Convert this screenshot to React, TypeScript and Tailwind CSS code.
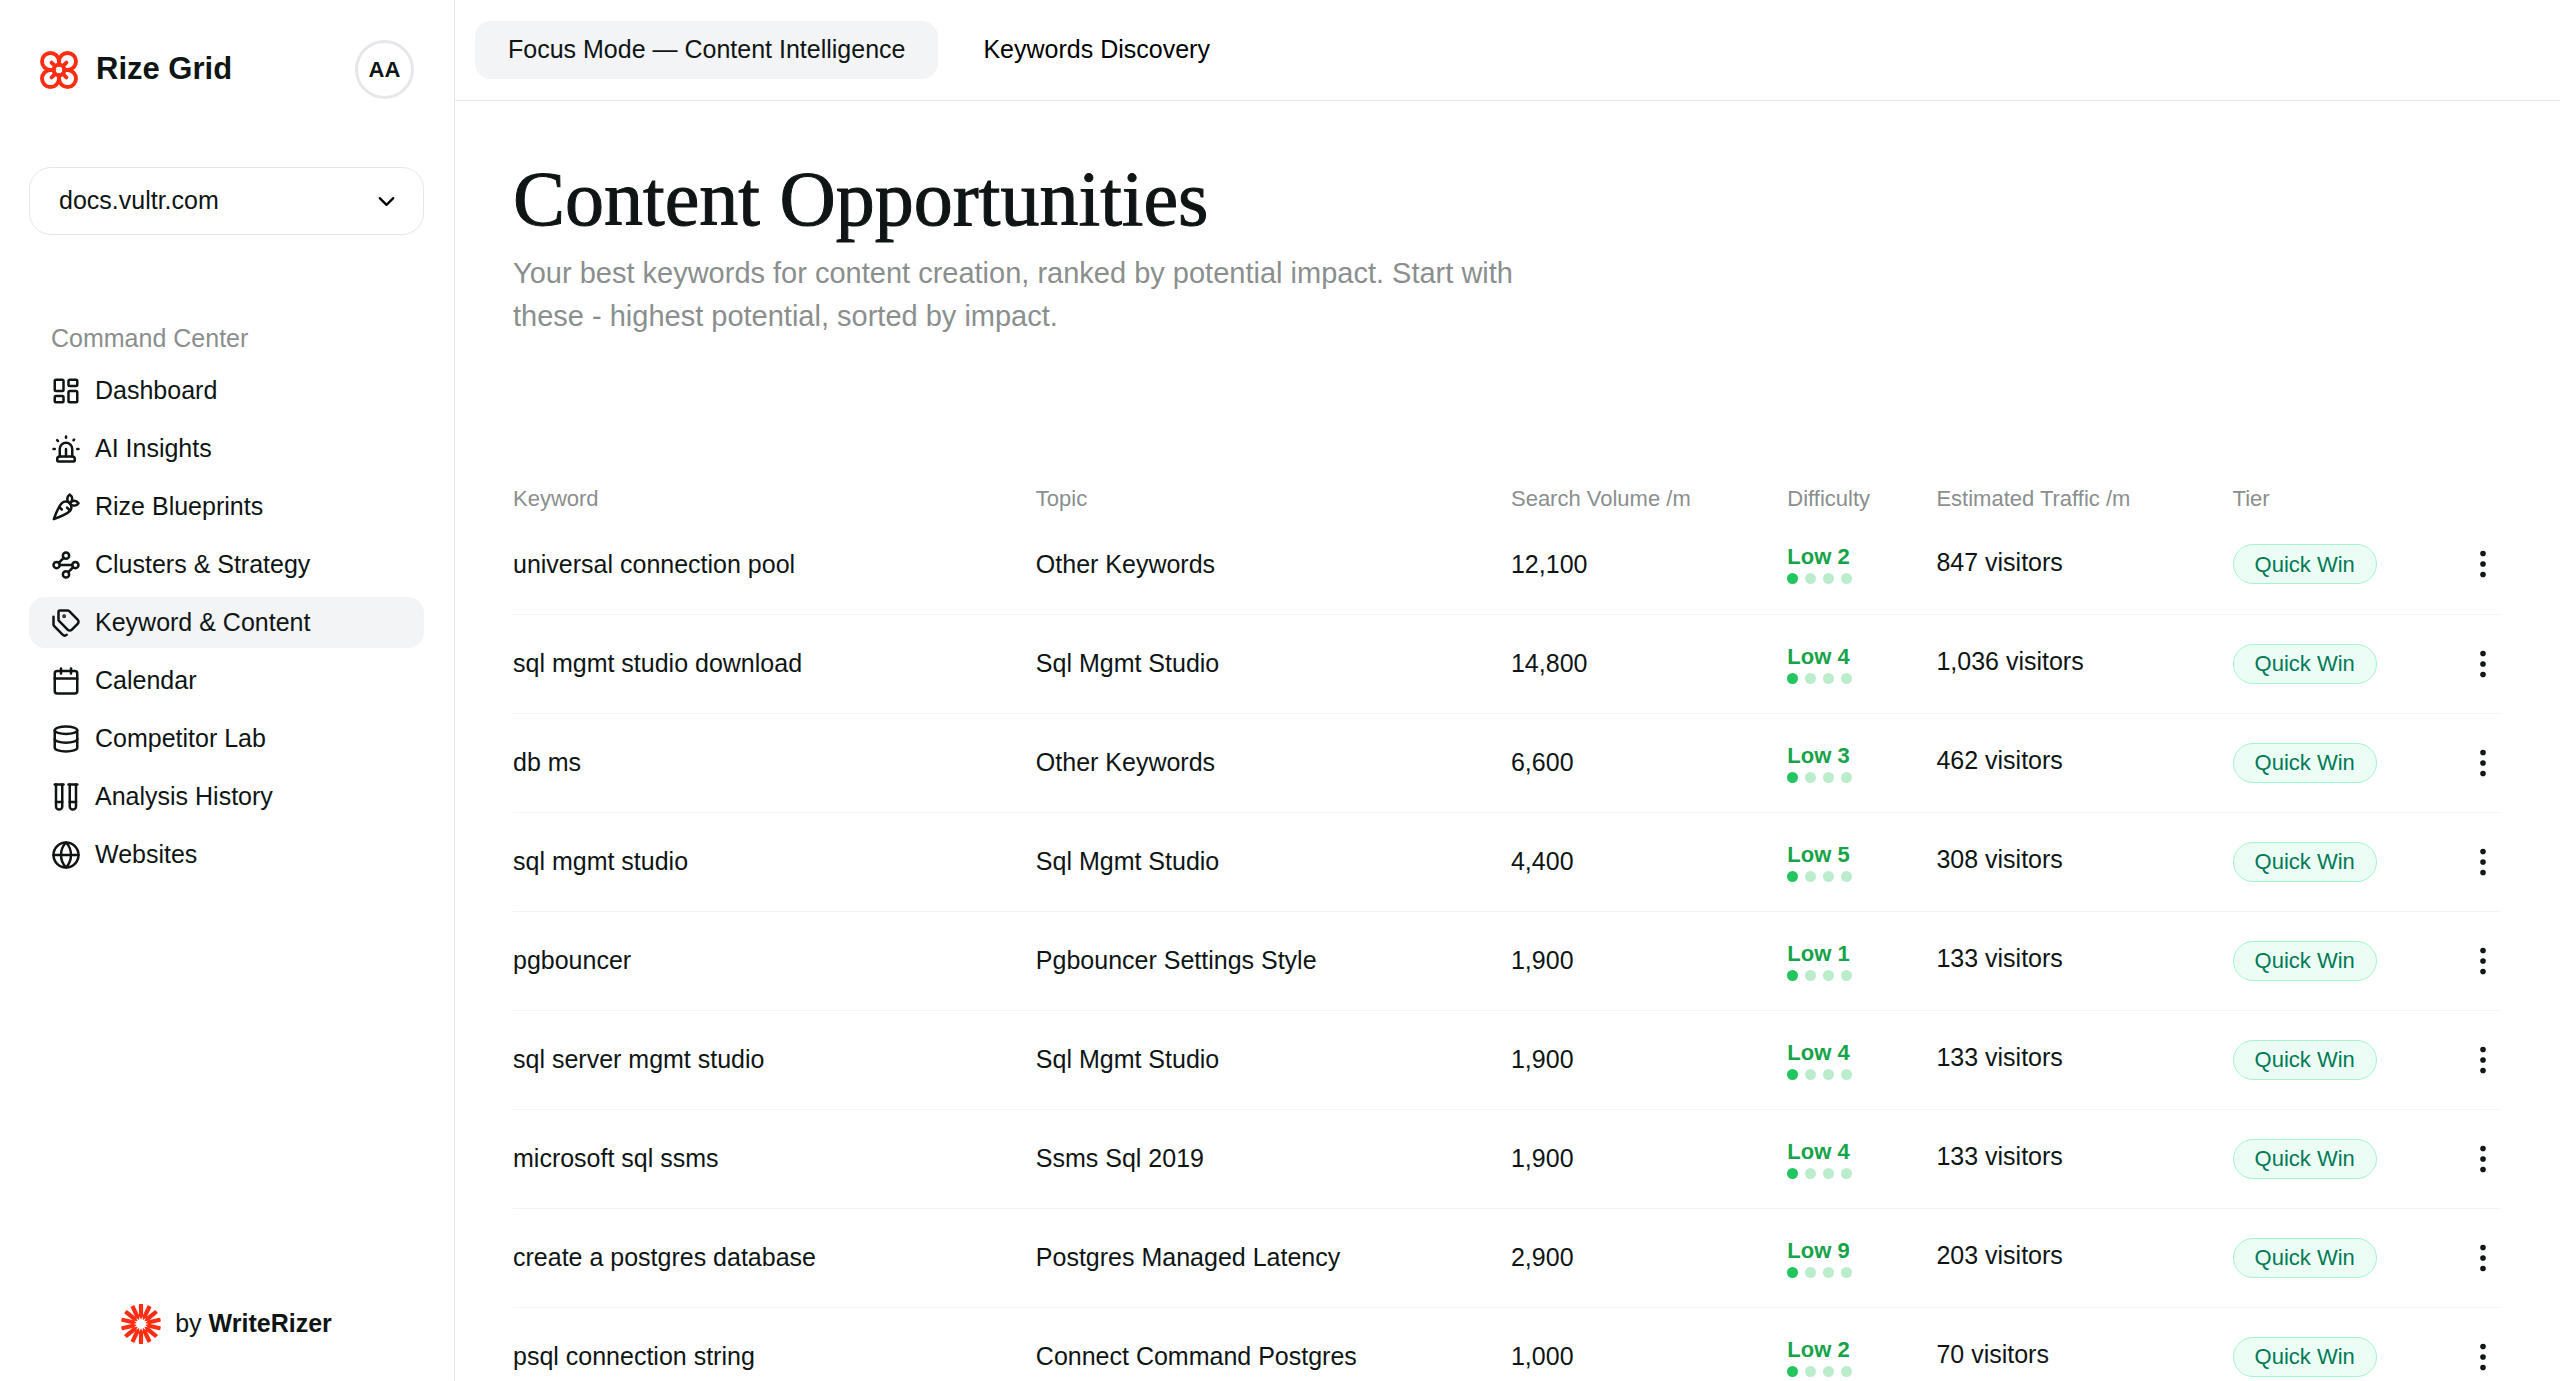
import React from 'react'
import {
  Calendar,
  Carrot,
  ChevronDown,
  Database,
  EllipsisVertical,
  Globe,
  LayoutDashboard,
  Siren,
  Tags,
  TestTubes,
  Waypoints,
} from 'lucide-react'
import type { LucideIcon } from 'lucide-react'

type KeywordRow = {
  keyword: string
  topic: string
  volume: string
  difficulty: number
  traffic: string
}

const NAV_ITEMS: { label: string; icon: LucideIcon }[] = [
  { label: 'Dashboard', icon: LayoutDashboard },
  { label: 'AI Insights', icon: Siren },
  { label: 'Rize Blueprints', icon: Carrot },
  { label: 'Clusters & Strategy', icon: Waypoints },
  { label: 'Keyword & Content', icon: Tags },
  { label: 'Calendar', icon: Calendar },
  { label: 'Competitor Lab', icon: Database },
  { label: 'Analysis History', icon: TestTubes },
  { label: 'Websites', icon: Globe },
]

const ROWS: KeywordRow[] = [
  { keyword: 'universal connection pool', topic: 'Other Keywords', volume: '12,100', difficulty: 2, traffic: '847' },
  { keyword: 'sql mgmt studio download', topic: 'Sql Mgmt Studio', volume: '14,800', difficulty: 4, traffic: '1,036' },
  { keyword: 'db ms', topic: 'Other Keywords', volume: '6,600', difficulty: 3, traffic: '462' },
  { keyword: 'sql mgmt studio', topic: 'Sql Mgmt Studio', volume: '4,400', difficulty: 5, traffic: '308' },
  { keyword: 'pgbouncer', topic: 'Pgbouncer Settings Style', volume: '1,900', difficulty: 1, traffic: '133' },
  { keyword: 'sql server mgmt studio', topic: 'Sql Mgmt Studio', volume: '1,900', difficulty: 4, traffic: '133' },
  { keyword: 'microsoft sql ssms', topic: 'Ssms Sql 2019', volume: '1,900', difficulty: 4, traffic: '133' },
  { keyword: 'create a postgres database', topic: 'Postgres Managed Latency', volume: '2,900', difficulty: 9, traffic: '203' },
  { keyword: 'psql connection string', topic: 'Connect Command Postgres', volume: '1,000', difficulty: 2, traffic: '70' },
]

const GridLogo = () => (
  <svg width="38" height="38" viewBox="0 0 38 38" fill="none" stroke="#ff2d12" strokeWidth="3.9" strokeLinecap="round">
    <circle cx="19" cy="19" r="5.4" />
    {[0, 90, 180, 270].map((angle) => (
      <g key={angle} transform={`rotate(${angle} 19 19)`}>
        <path d="M19 13.8V10.4A8.5 8.5 0 1 0 10.4 19H13.8" />
        <path d="M15.2 15.2L11.6 11.6" />
      </g>
    ))}
  </svg>
)

const BurstLogo = () => (
  <svg width="40" height="40" viewBox="0 0 40 40" fill="#ff2d12">
    {Array.from({ length: 14 }, (_, i) => (
      <path
        key={i}
        d="M18.5 0H21.5L22.1 .6V12L20 15.6L17.9 12V.6Z"
        transform={`rotate(${(i * 360) / 14} 20 20)`}
      />
    ))}
  </svg>
)

const Sidebar = () => (
  <aside className="flex w-[455px] shrink-0 flex-col border-r border-gray-200 pr-[30px] pl-[29px]">
    <div className="mt-10 flex items-center pr-[10px] pl-[11px]">
      <GridLogo />
      <span className="ml-[18px] text-[31px] font-bold">Rize Grid</span>
      <button className="ml-auto size-[59px] rounded-full border-3 border-gray-200 text-[22px] font-bold">
        AA
      </button>
    </div>
    <div className="relative mt-[68px]">
      <select
        aria-label="Website"
        className="h-[68px] w-full appearance-none rounded-[22px] border border-gray-200 bg-white pl-[29px] text-[25px]"
      >
        <option>docs.vultr.com</option>
      </select>
      <ChevronDown className="pointer-events-none absolute top-[21px] right-6 size-[27px] text-black" />
    </div>
    <nav className="mt-[87px]">
      <h2 className="px-[22px] text-[25px] leading-[32px] text-[#8a8f8e]">Command Center</h2>
      <ul className="mt-[11px] flex flex-col gap-[7px]">
        {NAV_ITEMS.map(({ label, icon: Icon }) => (
          <li key={label}>
            <a
              href="#"
              className={`flex h-[51px] items-center gap-[14px] rounded-2xl px-[22px] text-[25px] ${
                label === 'Keyword & Content' ? 'bg-gray-100' : ''
              }`}
            >
              <Icon className="size-[30px]" />
              {label}
            </a>
          </li>
        ))}
      </ul>
    </nav>
    <footer className="mt-auto mb-[37px] flex items-center justify-center gap-[14px] text-[25px]">
      <BurstLogo />
      <p>
        by <strong>WriteRizer</strong>
      </p>
    </footer>
  </aside>
)

const Difficulty: React.FC<{ score: number }> = ({ score }) => (
  <div>
    <p className="text-[22px] leading-[25px] font-bold text-[#16a34a]">Low {score}</p>
    <div className="mt-1 flex gap-[7px]">
      <span className="size-[11px] rounded-full bg-[#22c55e]" />
      <span className="size-[11px] rounded-full bg-[#bbedcd]" />
      <span className="size-[11px] rounded-full bg-[#bbedcd]" />
      <span className="size-[11px] rounded-full bg-[#bbedcd]" />
    </div>
  </div>
)

const KeywordTable = () => (
  <table className="mt-36 w-full table-fixed text-left">
    <colgroup>
      <col className="w-[26.3%]" />
      <col className="w-[23.9%]" />
      <col className="w-[13.9%]" />
      <col className="w-[7.5%]" />
      <col className="w-[14.9%]" />
      <col className="w-[10%]" />
      <col />
    </colgroup>
    <thead>
      <tr className="h-[33px] text-[22px] leading-[33px] text-[#8a8f8e] [&>th]:p-0 [&>th]:font-normal">
        <th>Keyword</th>
        <th>Topic</th>
        <th>Search Volume /m</th>
        <th>Difficulty</th>
        <th>Estimated Traffic /m</th>
        <th>Tier</th>
        <th aria-label="Actions" />
      </tr>
    </thead>
    <tbody>
      {ROWS.map((row) => (
        <tr key={row.keyword} className="h-[99px] border-b border-gray-100 text-[25px] [&>td]:p-0">
          <td>{row.keyword}</td>
          <td>{row.topic}</td>
          <td>{row.volume}</td>
          <td>
            <Difficulty score={row.difficulty} />
          </td>
          <td>
            <p className="pb-1">{row.traffic} visitors</p>
          </td>
          <td>
            <span className="inline-flex h-10 items-center rounded-full border border-[#a4f4cf] bg-[#ecfdf5] px-[21px] text-[22px] text-[#007a55]">
              Quick Win
            </span>
          </td>
          <td>
            <button aria-label="More" className="ml-auto block">
              <EllipsisVertical className="size-9" strokeWidth={1.75} />
            </button>
          </td>
        </tr>
      ))}
    </tbody>
  </table>
)

export default function App() {
  return (
    <div className="flex h-screen overflow-hidden bg-white font-['Liberation_Sans',Arial,sans-serif] text-[#0e1514]">
      <Sidebar />
      <main className="min-w-0 flex-1">
        <div className="flex h-[101px] items-center gap-3 border-b border-gray-200 px-5 text-[25px]">
          <button className="h-[58px] rounded-2xl bg-gray-100 px-[33px]">Focus Mode — Content Intelligence</button>
          <button className="h-[58px] rounded-2xl px-[33px] text-black">Keywords Discovery</button>
        </div>
        <div className="pt-[58px] pr-[59px] pl-[58px]">
          <h1 className="font-['Liberation_Serif',serif] text-[78px] leading-[80px] [-webkit-text-stroke:1px]">
            Content Opportunities
          </h1>
          <p className="mt-[13px] max-w-[1040px] text-[29px] leading-[43px] text-[#8a8f8e]">
            Your best keywords for content creation, ranked by potential impact. Start with these - highest potential,
            sorted by impact.
          </p>
          <KeywordTable />
        </div>
      </main>
    </div>
  )
}
